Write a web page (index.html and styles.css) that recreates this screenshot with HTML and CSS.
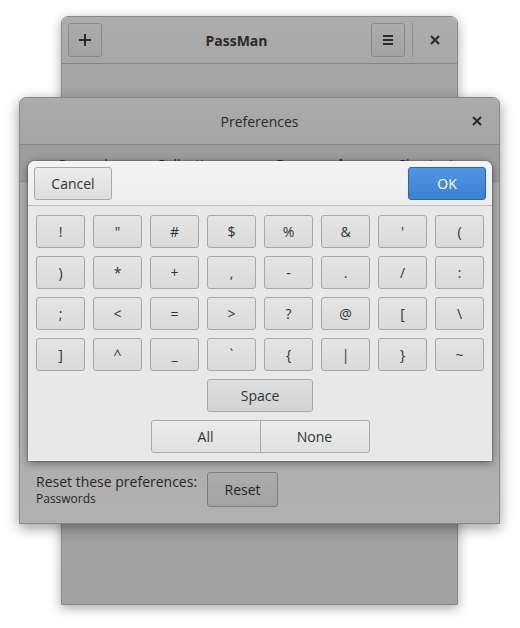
FILE: index.html
```html
<!DOCTYPE html>
<html>
<head>
<meta charset="utf-8">
<title>PassMan</title>
<link rel="stylesheet" href="styles.css">
</head>
<body>
<div class="desktop">
  <section class="win main-win">
    <header class="hb main-hb">
      <button class="hb-btn" aria-label="Add">
        <svg width="14" height="14" viewBox="0 0 14 14"><path d="M7 1v12M1 7h12" stroke="#2a2a2a" stroke-width="2"/></svg>
      </button>
      <div class="hb-title bold">PassMan</div>
      <button class="hb-btn" aria-label="Menu">
        <svg width="14" height="14" viewBox="0 0 14 14"><path d="M2 3h10M2 7h10M2 11h10" stroke="#2a2a2a" stroke-width="2"/></svg>
      </button>
      <span class="hb-sep"></span>
      <button class="hb-close" aria-label="Close">
        <svg width="10" height="10" viewBox="0 0 10 10"><path d="M1 1l8 8M9 1l-8 8" stroke="#2a2a2a" stroke-width="2"/></svg>
      </button>
    </header>
    <div class="main-body"></div>
  </section>

  <section class="win prefs-win">
    <header class="hb prefs-hb">
      <div class="hb-title">Preferences</div>
      <button class="hb-close prefs-close" aria-label="Close">
        <svg width="10" height="10" viewBox="0 0 10 10"><path d="M1 1l8 8M9 1l-8 8" stroke="#2a2a2a" stroke-width="2"/></svg>
      </button>
    </header>
    <nav class="tabs">
      <span class="tab">General</span>
      <span class="tab">Collections</span>
      <span class="tab active">Passwords</span>
      <span class="tab">Shortcuts</span>
    </nav>
    <div class="prefs-body">
      <div class="reset-row">
        <div class="reset-text">
          <div class="reset-label">Reset these preferences:</div>
          <div class="reset-sub">Passwords</div>
        </div>
        <button class="reset-btn">Reset</button>
      </div>
    </div>
  </section>

  <section class="dialog">
    <header class="dlg-hb">
      <button class="btn dlg-btn">Cancel</button>
      <button class="btn dlg-btn ok">OK</button>
    </header>
    <div class="dlg-body">
      <div class="grid">
        <button class="btn key">!</button>
        <button class="btn key">"</button>
        <button class="btn key">#</button>
        <button class="btn key">$</button>
        <button class="btn key">%</button>
        <button class="btn key">&amp;</button>
        <button class="btn key">'</button>
        <button class="btn key">(</button>
        <button class="btn key">)</button>
        <button class="btn key">*</button>
        <button class="btn key">+</button>
        <button class="btn key">,</button>
        <button class="btn key">-</button>
        <button class="btn key">.</button>
        <button class="btn key">/</button>
        <button class="btn key">:</button>
        <button class="btn key">;</button>
        <button class="btn key">&lt;</button>
        <button class="btn key">=</button>
        <button class="btn key">&gt;</button>
        <button class="btn key">?</button>
        <button class="btn key">@</button>
        <button class="btn key">[</button>
        <button class="btn key">\</button>
        <button class="btn key">]</button>
        <button class="btn key">^</button>
        <button class="btn key">_</button>
        <button class="btn key">`</button>
        <button class="btn key">{</button>
        <button class="btn key">|</button>
        <button class="btn key">}</button>
        <button class="btn key">~</button>
        <button class="btn key space">Space</button>
      </div>
      <div class="linked">
        <button class="btn seg first">All</button>
        <button class="btn seg last">None</button>
      </div>
    </div>
  </section>
</div>
</body>
</html>
```

FILE: styles.css
```css
* { box-sizing: border-box; }
html, body {
  margin: 0;
  padding: 0;
  background: #ffffff;
  width: 520px;
  height: 628px;
  overflow: hidden;
  font-family: "Open Sans", "Noto Sans", "DejaVu Sans", sans-serif;
  font-size: 13px;
  color: #2e3436;
}
button {
  font-family: inherit;
  font-size: inherit;
  color: inherit;
  margin: 0;
  padding: 0;
  cursor: default;
}
.desktop {
  position: relative;
  width: 520px;
  height: 628px;
}
.win {
  position: absolute;
  display: flex;
  flex-direction: column;
  border-radius: 7px 7px 0 0;
  overflow: hidden;
}
.main-win {
  left: 61px;
  top: 16px;
  width: 397px;
  height: 589px;
  border: 1px solid #8a8a8a;
  box-shadow: 0 3px 12px rgba(0,0,0,0.35);
}
.hb {
  display: flex;
  align-items: center;
  position: relative;
  flex: none;
}
.main-hb {
  height: 47px;
  padding: 0 0 0 6px;
  background: linear-gradient(#adadad, #a7a7a7);
  border-bottom: 1px solid #858585;
}
.hb-btn {
  width: 34px;
  height: 34px;
  border: 1px solid #888;
  border-radius: 3px;
  background: linear-gradient(#acacac, #a3a3a3);
  display: flex;
  align-items: center;
  justify-content: center;
  flex: none;
}
.hb-title {
  flex: 1;
  text-align: center;
  font-size: 14px;
  color: #2a2a2a;
}
.bold { font-weight: 700; }
.hb-sep {
  width: 1px;
  height: 34px;
  background: #8e8e8e;
  margin: 0 0 0 7px;
  flex: none;
}
.hb-close {
  width: 44px;
  height: 34px;
  border: none;
  background: transparent;
  display: flex;
  align-items: center;
  justify-content: center;
  flex: none;
}
.main-body {
  flex: 1;
  background: linear-gradient(#a6a6a6, #a2a2a2);
}

.prefs-win {
  left: 19px;
  top: 97px;
  width: 481px;
  height: 427px;
  border: 1px solid #888;
  box-shadow: 0 4px 14px rgba(0,0,0,0.4);
  background: #adadad;
}
.prefs-hb {
  height: 47px;
  background: linear-gradient(#ababab, #a5a5a5);
  border-bottom: 1px solid #878787;
  padding: 0;
}
.prefs-hb .hb-title {
  position: absolute;
  left: 0;
  right: 0;
  font-weight: 400;
  font-size: 14px;
}
.prefs-close {
  margin-left: auto;
  position: relative;
}
.tabs {
  height: 37px;
  flex: none;
  background: #9d9d9d;
  border-bottom: 1px solid #8c8c8c;
  display: flex;
  justify-content: space-around;
  align-items: flex-start;
  padding: 10px 14px 0 12px;
  color: #2e2e2e;
  font-size: 14px;
}
.tab.active { font-weight: 700; }
.prefs-body {
  flex: 1;
  display: flex;
  flex-direction: column;
  justify-content: flex-end;
  padding: 0 16px 16px 16px;
  background: linear-gradient(#aeaeae, #b0b0b0);
}
.reset-row {
  display: flex;
  align-items: center;
  gap: 10px;
}
.reset-text {
  padding-top: 3px;
}
.reset-label {
  font-size: 14px;
  color: #262626;
  line-height: 19px;
}
.reset-sub {
  font-size: 12px;
  color: #262626;
  line-height: 16px;
}
.reset-btn {
  width: 71px;
  height: 35px;
  border: 1px solid #7d7d7d;
  border-radius: 3px;
  background: linear-gradient(#acacac, #a3a3a3);
  font-size: 14px;
  color: #262626;
  margin-top: 2px;
}

.dialog {
  position: absolute;
  left: 28px;
  top: 161px;
  width: 464px;
  height: 300px;
  border-radius: 7px 7px 0 0;
  background: #e8e8e8;
  box-shadow: 0 2px 8px rgba(0,0,0,0.45), 0 0 0 1px rgba(0,0,0,0.15);
  display: flex;
  flex-direction: column;
  overflow: hidden;
}
.dlg-hb {
  height: 45px;
  flex: none;
  display: flex;
  justify-content: space-between;
  align-items: flex-start;
  padding: 6px 6px 0 6px;
  background: linear-gradient(#f4f4f4, #ededed);
  border-bottom: 1px solid #bcbcbc;
}
.btn {
  border: 1px solid #a8a8a8;
  border-radius: 3px;
  background: linear-gradient(#ececec, #dddddd);
  color: #2e3436;
  display: flex;
  align-items: center;
  justify-content: center;
  font-size: 14px;
}
.dlg-btn {
  width: 78px;
  height: 33px;
}
.dlg-btn.ok {
  background: linear-gradient(#4f95e2, #3c82d3);
  border-color: #2c68b0;
  color: #ffffff;
}
.dlg-body {
  flex: 1;
  padding: 9px 8px 8px 8px;
  display: flex;
  flex-direction: column;
  align-items: center;
}
.grid {
  display: grid;
  grid-template-columns: repeat(8, 49px);
  grid-auto-rows: 33px;
  column-gap: 8px;
  row-gap: 8px;
}
.key {
  background: linear-gradient(#e4e4e4, #dadada);
  border-color: #a6a6a6;
}
.key.space {
  grid-column: 4 / span 2;
  background: linear-gradient(#dedede, #d3d3d3);
}
.linked {
  display: flex;
  margin-top: 8px;
}
.seg {
  width: 110px;
  height: 33px;
  background: linear-gradient(#ececec, #e0e0e0);
}
.seg.first {
  border-radius: 3px 0 0 3px;
}
.seg.last {
  border-radius: 0 3px 3px 0;
  margin-left: -1px;
}
```
